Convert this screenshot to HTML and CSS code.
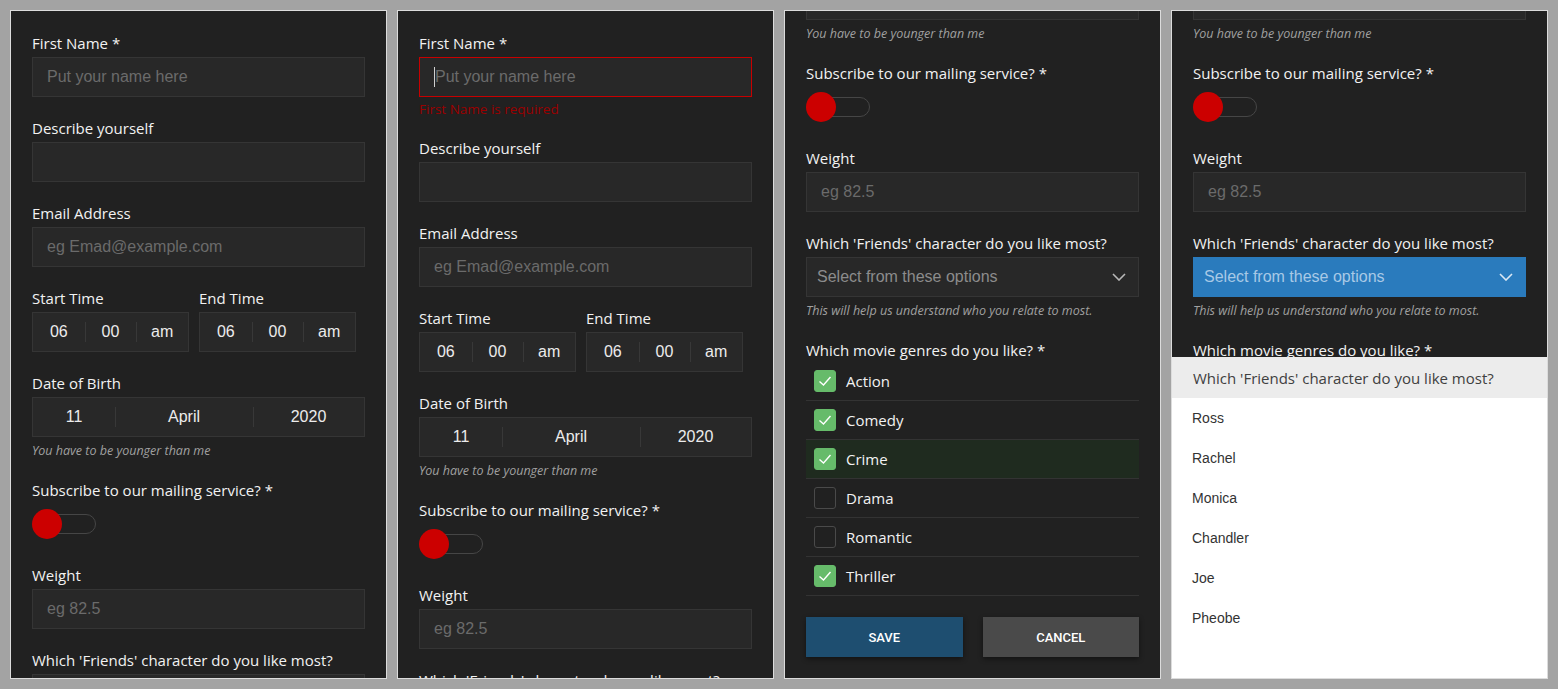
FILE: index.html
```html
<!DOCTYPE html>
<html lang="en">
<head>
<meta charset="utf-8">
<title>Form</title>
<link rel="stylesheet" href="styles.css">
</head>
<body>
<div class="page">

  <!-- Panel 1 -->
  <section class="panel">
    <form class="form">
      <div class="field">
        <div class="label">First Name *</div>
        <div class="input"><span class="ph">Put your name here</span></div>
      </div>
      <div class="field">
        <div class="label">Describe yourself</div>
        <div class="input"></div>
      </div>
      <div class="field">
        <div class="label">Email Address</div>
        <div class="input"><span class="ph">eg Emad@example.com</span></div>
      </div>
      <div class="field times">
        <div class="col">
          <div class="label">Start Time</div>
          <div class="segbox"><span class="seg">06</span><span class="seg">00</span><span class="seg">am</span></div>
        </div>
        <div class="col">
          <div class="label">End Time</div>
          <div class="segbox"><span class="seg">06</span><span class="seg">00</span><span class="seg">am</span></div>
        </div>
      </div>
      <div class="field">
        <div class="label">Date of Birth</div>
        <div class="segbox date"><span class="seg d">11</span><span class="seg m">April</span><span class="seg y">2020</span></div>
        <div class="helper">You have to be younger than me</div>
      </div>
      <div class="field">
        <div class="label">Subscribe to our mailing service? *</div>
        <div class="toggle-wrap"><div class="toggle"><span class="knob"></span></div></div>
      </div>
      <div class="field">
        <div class="label">Weight</div>
        <div class="input"><span class="ph">eg 82.5</span></div>
      </div>
      <div class="field">
        <div class="label">Which 'Friends' character do you like most?</div>
        <div class="select"><span>Select from these options</span><svg class="chev" width="14" height="8" viewBox="0 0 14 8"><polyline points="1,1 7,7 13,1"/></svg></div>
        <div class="helper">This will help us understand who you relate to most.</div>
      </div>
      <div class="field">
        <div class="label tight">Which movie genres do you like? *</div>
        <div class="opts">
          <div class="opt"><span class="cb on"><svg width="22" height="22" viewBox="0 0 22 22"><polyline points="5.5,11.5 9.5,15 16.5,7"/></svg></span>Action</div>
          <div class="opt"><span class="cb on"><svg width="22" height="22" viewBox="0 0 22 22"><polyline points="5.5,11.5 9.5,15 16.5,7"/></svg></span>Comedy</div>
          <div class="opt hl"><span class="cb on"><svg width="22" height="22" viewBox="0 0 22 22"><polyline points="5.5,11.5 9.5,15 16.5,7"/></svg></span>Crime</div>
          <div class="opt"><span class="cb"></span>Drama</div>
          <div class="opt"><span class="cb"></span>Romantic</div>
          <div class="opt"><span class="cb on"><svg width="22" height="22" viewBox="0 0 22 22"><polyline points="5.5,11.5 9.5,15 16.5,7"/></svg></span>Thriller</div>
        </div>
      </div>
      <div class="actions"><span class="btn save">Save</span><span class="btn cancel">Cancel</span></div>
    </form>
  </section>

  <!-- Panel 2 -->
  <section class="panel">
    <form class="form">
      <div class="field">
        <div class="label">First Name *</div>
        <div class="input err"><span class="caret"></span><span class="ph">Put your name here</span></div>
        <div class="error">First Name is required</div>
      </div>
      <div class="field">
        <div class="label">Describe yourself</div>
        <div class="input"></div>
      </div>
      <div class="field">
        <div class="label">Email Address</div>
        <div class="input"><span class="ph">eg Emad@example.com</span></div>
      </div>
      <div class="field times">
        <div class="col">
          <div class="label">Start Time</div>
          <div class="segbox"><span class="seg">06</span><span class="seg">00</span><span class="seg">am</span></div>
        </div>
        <div class="col">
          <div class="label">End Time</div>
          <div class="segbox"><span class="seg">06</span><span class="seg">00</span><span class="seg">am</span></div>
        </div>
      </div>
      <div class="field">
        <div class="label">Date of Birth</div>
        <div class="segbox date"><span class="seg d">11</span><span class="seg m">April</span><span class="seg y">2020</span></div>
        <div class="helper">You have to be younger than me</div>
      </div>
      <div class="field">
        <div class="label">Subscribe to our mailing service? *</div>
        <div class="toggle-wrap"><div class="toggle"><span class="knob"></span></div></div>
      </div>
      <div class="field">
        <div class="label">Weight</div>
        <div class="input"><span class="ph">eg 82.5</span></div>
      </div>
      <div class="field">
        <div class="label">Which 'Friends' character do you like most?</div>
        <div class="select"><span>Select from these options</span><svg class="chev" width="14" height="8" viewBox="0 0 14 8"><polyline points="1,1 7,7 13,1"/></svg></div>
        <div class="helper">This will help us understand who you relate to most.</div>
      </div>
    </form>
  </section>

  <!-- Panel 3 -->
  <section class="panel">
    <form class="form scrolled">
      <div class="field">
        <div class="label">First Name *</div>
        <div class="input"><span class="ph">Put your name here</span></div>
      </div>
      <div class="field">
        <div class="label">Describe yourself</div>
        <div class="input"></div>
      </div>
      <div class="field">
        <div class="label">Email Address</div>
        <div class="input"><span class="ph">eg Emad@example.com</span></div>
      </div>
      <div class="field times">
        <div class="col">
          <div class="label">Start Time</div>
          <div class="segbox"><span class="seg">06</span><span class="seg">00</span><span class="seg">am</span></div>
        </div>
        <div class="col">
          <div class="label">End Time</div>
          <div class="segbox"><span class="seg">06</span><span class="seg">00</span><span class="seg">am</span></div>
        </div>
      </div>
      <div class="field">
        <div class="label">Date of Birth</div>
        <div class="segbox date"><span class="seg d">11</span><span class="seg m">April</span><span class="seg y">2020</span></div>
        <div class="helper">You have to be younger than me</div>
      </div>
      <div class="field">
        <div class="label">Subscribe to our mailing service? *</div>
        <div class="toggle-wrap"><div class="toggle"><span class="knob"></span></div></div>
      </div>
      <div class="field">
        <div class="label">Weight</div>
        <div class="input"><span class="ph">eg 82.5</span></div>
      </div>
      <div class="field">
        <div class="label">Which 'Friends' character do you like most?</div>
        <div class="select"><span>Select from these options</span><svg class="chev" width="14" height="8" viewBox="0 0 14 8"><polyline points="1,1 7,7 13,1"/></svg></div>
        <div class="helper">This will help us understand who you relate to most.</div>
      </div>
      <div class="field">
        <div class="label tight">Which movie genres do you like? *</div>
        <div class="opts">
          <div class="opt"><span class="cb on"><svg width="22" height="22" viewBox="0 0 22 22"><polyline points="5.5,11.5 9.5,15 16.5,7"/></svg></span>Action</div>
          <div class="opt"><span class="cb on"><svg width="22" height="22" viewBox="0 0 22 22"><polyline points="5.5,11.5 9.5,15 16.5,7"/></svg></span>Comedy</div>
          <div class="opt hl"><span class="cb on"><svg width="22" height="22" viewBox="0 0 22 22"><polyline points="5.5,11.5 9.5,15 16.5,7"/></svg></span>Crime</div>
          <div class="opt"><span class="cb"></span>Drama</div>
          <div class="opt"><span class="cb"></span>Romantic</div>
          <div class="opt"><span class="cb on"><svg width="22" height="22" viewBox="0 0 22 22"><polyline points="5.5,11.5 9.5,15 16.5,7"/></svg></span>Thriller</div>
        </div>
      </div>
      <div class="actions"><span class="btn save">Save</span><span class="btn cancel">Cancel</span></div>
    </form>
  </section>

  <!-- Panel 4 -->
  <section class="panel">
    <form class="form scrolled">
      <div class="field">
        <div class="label">First Name *</div>
        <div class="input"><span class="ph">Put your name here</span></div>
      </div>
      <div class="field">
        <div class="label">Describe yourself</div>
        <div class="input"></div>
      </div>
      <div class="field">
        <div class="label">Email Address</div>
        <div class="input"><span class="ph">eg Emad@example.com</span></div>
      </div>
      <div class="field times">
        <div class="col">
          <div class="label">Start Time</div>
          <div class="segbox"><span class="seg">06</span><span class="seg">00</span><span class="seg">am</span></div>
        </div>
        <div class="col">
          <div class="label">End Time</div>
          <div class="segbox"><span class="seg">06</span><span class="seg">00</span><span class="seg">am</span></div>
        </div>
      </div>
      <div class="field">
        <div class="label">Date of Birth</div>
        <div class="segbox date"><span class="seg d">11</span><span class="seg m">April</span><span class="seg y">2020</span></div>
        <div class="helper">You have to be younger than me</div>
      </div>
      <div class="field">
        <div class="label">Subscribe to our mailing service? *</div>
        <div class="toggle-wrap"><div class="toggle"><span class="knob"></span></div></div>
      </div>
      <div class="field">
        <div class="label">Weight</div>
        <div class="input"><span class="ph">eg 82.5</span></div>
      </div>
      <div class="field">
        <div class="label">Which 'Friends' character do you like most?</div>
        <div class="select focus"><span>Select from these options</span><svg class="chev" width="14" height="8" viewBox="0 0 14 8"><polyline points="1,1 7,7 13,1"/></svg></div>
        <div class="helper">This will help us understand who you relate to most.</div>
      </div>
      <div class="field">
        <div class="label tight">Which movie genres do you like? *</div>
        <div class="opts">
          <div class="opt"><span class="cb on"></span>Action</div>
          <div class="opt"><span class="cb on"></span>Comedy</div>
          <div class="opt"><span class="cb on"></span>Crime</div>
          <div class="opt"><span class="cb"></span>Drama</div>
          <div class="opt"><span class="cb"></span>Romantic</div>
          <div class="opt"><span class="cb on"></span>Thriller</div>
        </div>
      </div>
    </form>
    <ul class="dropdown">
      <li class="dd-head">Which 'Friends' character do you like most?</li>
      <li class="dd-item">Ross</li>
      <li class="dd-item">Rachel</li>
      <li class="dd-item">Monica</li>
      <li class="dd-item">Chandler</li>
      <li class="dd-item">Joe</li>
      <li class="dd-item">Pheobe</li>
    </ul>
  </section>

</div>
</body>
</html>
```
FILE: styles.css
```css
* { box-sizing: border-box; }

body {
  margin: 0;
  background: #a3a3a3;
  font-family: "Open Sans", "Noto Sans", sans-serif;
}

.page {
  display: flex;
  gap: 10px;
  padding: 10px;
}

.panel {
  flex: none;
  position: relative;
  width: 377px;
  height: 669px;
  border: 1px solid #dcdcdc;
  background: #212121;
  overflow: hidden;
  padding: 22px 21px 21px;
}

.form { margin: 0; }
.form.scrolled { margin-top: -417px; }

.field { margin-bottom: 21px; }

.label {
  color: #f2f2f2;
  font-size: 15px;
  line-height: 20px;
  margin-bottom: 4px;
  white-space: nowrap;
}
.label.tight { margin-bottom: 2px; }

.input {
  height: 40px;
  border: 1px solid #353535;
  background: #282828;
  padding: 0 14px;
  display: flex;
  align-items: center;
  font: 16px "Liberation Sans", Arial, sans-serif;
  color: #6b6b6b;
}
.input.err { border-color: #c80000; }

.caret {
  width: 1px;
  height: 20px;
  background: #d0d0d0;
  flex: none;
}

.error {
  margin-top: 4px;
  font-size: 13.5px;
  line-height: 16px;
  color: #9a0000;
}

.helper {
  margin-top: 6px;
  font-size: 12.5px;
  line-height: 16px;
  font-style: italic;
  color: #a0a0a0;
  white-space: nowrap;
}

.times {
  display: flex;
  gap: 10px;
}
.times .col { width: 157px; }

.segbox {
  height: 40px;
  display: flex;
  border: 1px solid #353535;
  background: #282828;
}
.seg {
  flex: 1;
  display: flex;
  align-items: center;
  justify-content: center;
  font: 16px "Liberation Sans", Arial, sans-serif;
  color: #ececec;
}
.seg + .seg {
  background: linear-gradient(#383838, #383838) left center / 1px 20px no-repeat;
}
.seg.d { flex: 0 0 82px; }
.seg.m { flex: 0 0 138px; }
.seg.y { flex: 1; }

.toggle-wrap {
  height: 40px;
  display: flex;
  align-items: center;
}
.toggle {
  width: 63px;
  height: 20px;
  margin-left: 1px;
  border: 1px solid #464646;
  border-radius: 10px;
  display: flex;
  align-items: center;
}
.knob {
  flex: none;
  width: 30px;
  height: 30px;
  margin-left: -2px;
  border-radius: 50%;
  background: #cc0000;
}

.select {
  height: 40px;
  border: 1px solid #353535;
  background: #282828;
  padding: 0 12px 0 10px;
  display: flex;
  align-items: center;
  justify-content: space-between;
  font: 16px "Liberation Sans", Arial, sans-serif;
  color: #8c8c8c;
}
.chev polyline {
  fill: none;
  stroke: #b8b8b8;
  stroke-width: 1.6;
}
.select.focus {
  background: #2a7bbd;
  border-color: #2a7bbd;
  color: #a8c9e6;
}
.select.focus .chev polyline { stroke: #dbe8f4; }

.opts { display: flex; flex-direction: column; }
.opt {
  height: 39px;
  border-bottom: 1px solid #333;
  padding-left: 8px;
  display: flex;
  align-items: center;
  gap: 10px;
  font-size: 15px;
  color: #f2f2f2;
}
.opt.hl { background: #1f2b1f; }

.cb {
  flex: none;
  width: 22px;
  height: 22px;
  border-radius: 3px;
  border: 1.5px solid #4a4a4a;
  display: flex;
  align-items: center;
  justify-content: center;
}
.cb.on {
  background: #66bb6a;
  border-color: #66bb6a;
}
.cb svg { display: block; flex: none; }
.cb polyline {
  fill: none;
  stroke: #ffffff;
  stroke-width: 1.4;
}

.actions {
  display: flex;
  gap: 20px;
  margin-top: 21px;
}
.btn {
  flex: 1;
  height: 40px;
  display: flex;
  align-items: center;
  justify-content: center;
  font: 500 13px Roboto, "Liberation Sans", sans-serif;
  text-transform: uppercase;
  color: #ffffff;
  box-shadow: 0 2px 5px rgba(0, 0, 0, 0.45);
}
.btn.save { background: #1e4e70; }
.btn.cancel { background: #4a4a4a; }

.dropdown {
  position: absolute;
  top: 346px;
  left: 0;
  right: 0;
  bottom: 0;
  margin: 0;
  padding: 0;
  list-style: none;
  background: #ffffff;
}
.dd-head {
  height: 41px;
  background: #ececec;
  padding-left: 21px;
  display: flex;
  align-items: center;
  font-size: 15px;
  color: #404040;
  white-space: nowrap;
}
.dd-item {
  height: 40px;
  padding-left: 20px;
  display: flex;
  align-items: center;
  font: 14px "Liberation Sans", Arial, sans-serif;
  color: #333333;
}
```
